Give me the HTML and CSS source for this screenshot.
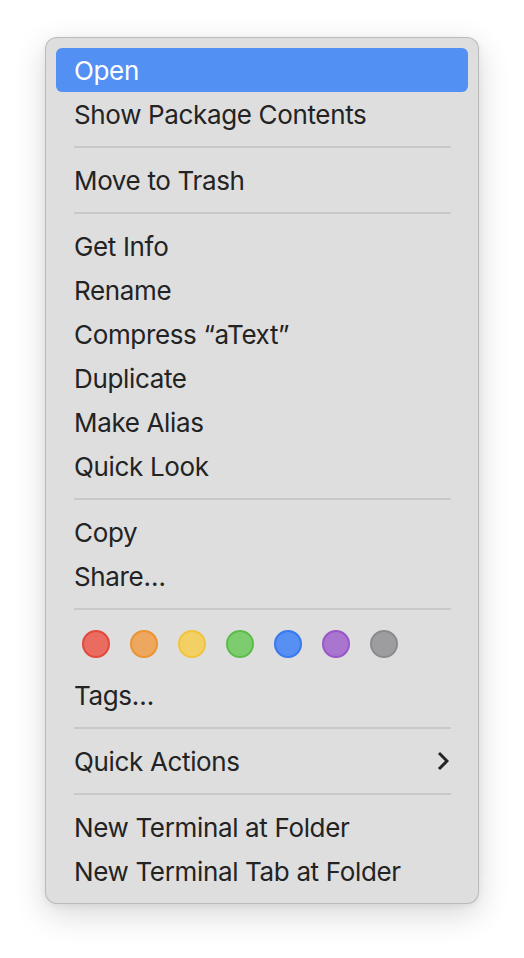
FILE: index.html
```html
<!DOCTYPE html>
<html lang="en">
<head>
<meta charset="utf-8">
<title>Context Menu</title>
<link rel="stylesheet" href="styles.css">
</head>
<body>
<div class="menu">
  <div class="item active">Open</div>
  <div class="item">Show Package Contents</div>
  <div class="sep"></div>
  <div class="item">Move to Trash</div>
  <div class="sep"></div>
  <div class="item">Get Info</div>
  <div class="item">Rename</div>
  <div class="item">Compress “aText”</div>
  <div class="item">Duplicate</div>
  <div class="item">Make Alias</div>
  <div class="item">Quick Look</div>
  <div class="sep"></div>
  <div class="item">Copy</div>
  <div class="item">Share…</div>
  <div class="sep"></div>
  <div class="tags">
    <span class="dot red"></span>
    <span class="dot orange"></span>
    <span class="dot yellow"></span>
    <span class="dot green"></span>
    <span class="dot blue"></span>
    <span class="dot purple"></span>
    <span class="dot gray"></span>
  </div>
  <div class="item">Tags…</div>
  <div class="sep"></div>
  <div class="item submenu">
    <span>Quick Actions</span>
    <svg class="chev" width="12" height="20" viewBox="0 0 12 20"><polyline points="2,2 10,10 2,18" fill="none" stroke="#242424" stroke-width="3" stroke-linejoin="miter"/></svg>
  </div>
  <div class="sep"></div>
  <div class="item">New Terminal at Folder</div>
  <div class="item">New Terminal Tab at Folder</div>
</div>
</body>
</html>
```

FILE: styles.css
```css
html, body {
  margin: 0;
  padding: 0;
  background: #ffffff;
}
body {
  box-sizing: border-box;
  min-height: 958px;
  padding: 37px 0 0 45px;
  font-family: Inter, "Noto Sans", "Liberation Sans", sans-serif;
}
.menu {
  box-sizing: border-box;
  width: 434px;
  padding: 10px;
  background: #dedede;
  border: 1px solid rgba(0, 0, 0, 0.16);
  border-radius: 12px;
  box-shadow: 0 10px 32px rgba(0, 0, 0, 0.16), 0 2px 6px rgba(0, 0, 0, 0.06);
  display: flex;
  flex-direction: column;
}
.item {
  height: 44px;
  display: flex;
  align-items: center;
  padding-left: 18px;
  padding-right: 19px;
  font-size: 26px;
  letter-spacing: -0.35px;
  color: #232323;
  border-radius: 6px;
}
.item.active {
  background: #5290f3;
  color: #ffffff;
}
.submenu {
  justify-content: space-between;
}
.chev {
  display: block;
}
.sep {
  height: 22px;
  display: flex;
  align-items: center;
  padding: 0 17px 0 18px;
}
.sep::before {
  content: "";
  display: block;
  flex: 1;
  height: 2px;
  background: #c9c9c9;
}
.tags {
  height: 53px;
  display: flex;
  align-items: flex-start;
  padding: 10px 0 0 26px;
  box-sizing: border-box;
  gap: 20px;
}
.dot {
  box-sizing: border-box;
  width: 28px;
  height: 28px;
  border-radius: 50%;
  border: 2px solid;
}
.red { background: #ea6b60; border-color: #e2483c; }
.orange { background: #eea75f; border-color: #ec9331; }
.yellow { background: #f3d064; border-color: #f1c43d; }
.green { background: #7dcc6f; border-color: #5cbd4b; }
.blue { background: #588ff2; border-color: #3679f0; }
.purple { background: #a975cf; border-color: #9a56c8; }
.gray { background: #9d9da0; border-color: #8b8b8e; }
```
